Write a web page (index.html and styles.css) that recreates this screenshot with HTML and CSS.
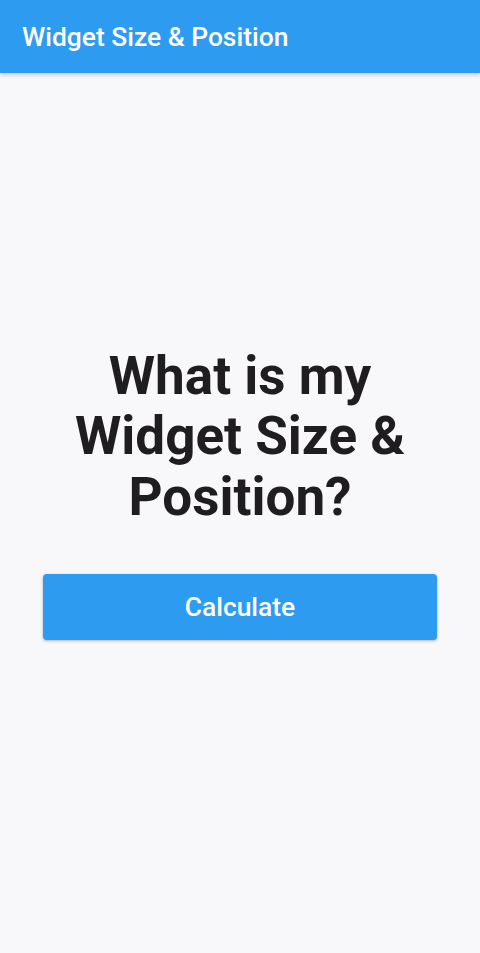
FILE: index.html
```html
<!DOCTYPE html>
<html>
<head>
<meta charset="utf-8">
<link rel="stylesheet" href="styles.css">
</head>
<body>
<header class="appbar"><span class="title">Widget Size &amp; Position</span></header>
<main class="content">
  <h1 class="question">What is my<br>Widget Size &amp;<br>Position?</h1>
  <button class="calc">Calculate</button>
</main>
</body>
</html>
```
FILE: styles.css
```css
html, body {
  margin: 0;
  padding: 0;
  height: 100%;
}
body {
  background: #f8f7fa;
  font-family: Roboto, "Noto Sans", sans-serif;
  display: flex;
  flex-direction: column;
}
.appbar {
  height: 73px;
  background: #2d9bf0;
  display: flex;
  align-items: center;
  padding-left: 22px;
  box-shadow: 0 2px 4px rgba(0,0,0,0.18);
  position: relative;
  z-index: 1;
}
.title {
  color: #fff;
  font-size: 26.4px;
  font-weight: 500;
}
.content {
  flex: 1;
  display: flex;
  flex-direction: column;
  align-items: center;
  justify-content: center;
  padding: 0 43px 40px;
}
.question {
  margin: 0;
  font-size: 53px;
  line-height: 60.5px;
  font-weight: 700;
  color: #1f1d20;
  text-align: center;
}
.calc {
  margin-top: 47px;
  width: 100%;
  height: 66px;
  border: none;
  border-radius: 4px;
  background: #2d9bf0;
  color: #fff;
  font-family: Roboto, sans-serif;
  font-size: 26.4px;
  font-weight: 500;
  box-shadow: 0 1px 3px rgba(0,0,0,0.3);
}
```
